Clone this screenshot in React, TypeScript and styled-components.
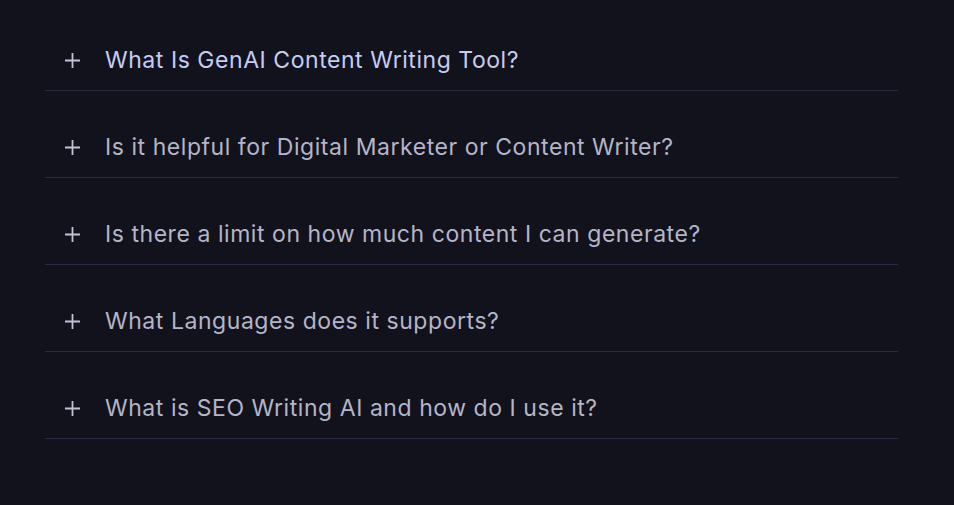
import React from "react";
import styled, { createGlobalStyle } from "styled-components";

const GlobalStyle = createGlobalStyle`
  html, body {
    margin: 0;
    padding: 0;
    background: #12121c;
  }
  body {
    font-family: Inter, "Noto Sans", sans-serif;
  }
`;

const faqs = [
  "What Is GenAI Content Writing Tool?",
  "Is it helpful for Digital Marketer or Content Writer?",
  "Is there a limit on how much content I can generate?",
  "What Languages does it supports?",
  "What is SEO Writing AI and how do I use it?",
];

const Page = styled.div`
  min-height: 505px;
  box-sizing: border-box;
  padding: 4px 0 0 45px;
  background: #12121c;
`;

const FaqList = styled.div`
  width: 853px;
  display: flex;
  flex-direction: column;
`;

const FaqItem = styled.div`
  border-bottom: 1px solid #2b2a3e;
  padding: 41px 0 15px;
`;

const FaqHeader = styled.div`
  display: flex;
  align-items: center;
  gap: 24px;
  padding-left: 19px;
  height: 30px;
  cursor: pointer;
`;

interface IQuestionProps {
  active?: boolean;
}

const Question = styled.span<IQuestionProps>`
  font-size: 23px;
  line-height: 30px;
  letter-spacing: 0.55px;
  color: ${props => (props.active ? "#c6cdf4" : "#b5b5c9")};
`;

const PlusIcon = () => (
  <svg width="17" height="17" viewBox="0 0 17 17" fill="none">
    <path d="M8.5 1v15M1 8.5h15" stroke="#c2c2d4" strokeWidth="1.8" />
  </svg>
);

const App: React.FC = () => {
  return (
    <Page>
      <GlobalStyle />
      <FaqList>
        {faqs.map((q, i) => (
          <FaqItem key={q}>
            <FaqHeader>
              <PlusIcon />
              <Question active={i === 0}>{q}</Question>
            </FaqHeader>
          </FaqItem>
        ))}
      </FaqList>
    </Page>
  );
};

export default App;
